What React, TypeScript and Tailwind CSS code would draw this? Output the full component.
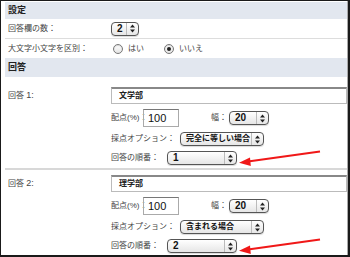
import React from "react";

const FONT = '"Liberation Sans", "Noto Sans CJK JP", sans-serif';

function Arrows() {
  return (
    <svg width="7" height="9" viewBox="0 0 7 9" className="shrink-0">
      <path d="M3.5 0.5 L6 3.5 L1 3.5 Z" fill="#222" />
      <path d="M3.5 8.5 L6 5.5 L1 5.5 Z" fill="#222" />
    </svg>
  );
}

function Select({ value, w, latin }: { value: string; w: string; latin?: boolean }) {
  return (
    <div
      className={`${w} h-[14px] shrink-0 flex items-center justify-between rounded-[4px] border border-[#555] bg-gradient-to-b from-white to-[#e6e6e6] pl-[5px] pr-[2px] ${latin ? "text-[10px]" : "text-[8px]"} font-bold text-[#111] leading-none whitespace-nowrap shadow-[0_1px_1px_rgba(0,0,0,0.15)]`}
    >
      <span>{value}</span>
      <div className="flex h-full items-center border-l border-[#bbb] pl-[2px]">
        <Arrows />
      </div>
    </div>
  );
}

function Radio({ checked }: { checked?: boolean }) {
  return (
    <div className="w-[10px] h-[10px] shrink-0 rounded-full border border-[#777] bg-gradient-to-b from-white to-[#e4e4e4] flex items-center justify-center shadow-[inset_0_1px_1px_rgba(0,0,0,0.15)]">
      {checked && <div className="w-[4px] h-[4px] rounded-full bg-[#222]" />}
    </div>
  );
}

function RedArrow() {
  return (
    <svg width="84" height="16" viewBox="0 0 84 16" className="absolute">
      <line x1="82" y1="1.5" x2="10" y2="11.5" stroke="#f01818" strokeWidth="2" />
      <path d="M1 12.8 L12 7.5 L12.8 16 Z" fill="#f01818" />
    </svg>
  );
}

const LBL = "text-[8px] text-[#444] whitespace-nowrap";

function Answer({
  n,
  text,
  option,
  order,
  top,
}: {
  n: string;
  text: string;
  option: string;
  order: string;
  top: string;
}) {
  return (
    <div className="relative">
      <div className={`flex items-center h-[17px] ${top}`}>
        <div className={`w-[106px] shrink-0 pl-[3px] ${LBL}`}>
          回答 <span className="text-[9px]">{n}:</span>
        </div>
        <div className="flex-1 h-[17px] border border-[#bbb] border-t-[#888] border-t-2 flex items-center pl-[7px] text-[8px] font-bold text-[#222] whitespace-nowrap">
          {text}
        </div>
      </div>
      <div className="flex items-center h-[18px] mt-[5px] pl-[106px]">
        <span className={`w-[32px] shrink-0 ${LBL}`}>配点(%)：</span>
        <div className="w-[36px] h-[18px] shrink-0 border border-[#aaa] border-t-[#777] flex items-center pl-[4px] text-[11px] text-[#111]">
          100
        </div>
        <span className={`ml-[32px] w-[18px] shrink-0 ${LBL}`}>幅：</span>
        <Select value="20" w="w-[40px]" latin />
      </div>
      <div className="flex items-center h-[14px] mt-[5px] pl-[106px]">
        <span className={`w-[69px] shrink-0 ${LBL}`}>採点オプション：</span>
        <Select value={option} w="w-[84px]" />
      </div>
      <div className="flex items-center h-[14px] mt-[5px] pl-[106px]">
        <span className={`w-[56px] shrink-0 ${LBL}`}>回答の順番：</span>
        <Select value={order} w="w-[70px]" latin />
      </div>
      <div className="absolute left-[233px] bottom-[-1px]">
        <div className="relative w-[84px] h-[16px]">
          <RedArrow />
        </div>
      </div>
    </div>
  );
}

export default function App() {
  return (
    <div
      className="w-[350px] h-[257px] overflow-hidden bg-white border-l border-t border-r-2 border-b-2 border-[#1a1a1a]"
      style={{ fontFamily: FONT }}
    >
      <div className="h-full pl-[4px] border-r border-[#aaa] pt-[1px]">
        <div className="h-[17px] bg-[#e2e7ef] flex items-center pl-[3px] text-[9px] font-bold text-[#222]">
          設定
        </div>
        <div className="flex items-center h-[20px] border-b border-[#ddd]">
          <div className={`w-[106px] shrink-0 pl-[3px] ${LBL}`}>回答欄の数：</div>
          <Select value="2" w="w-[28px]" latin />
        </div>
        <div className="flex items-center h-[19px]">
          <div className={`w-[108px] shrink-0 pl-[3px] ${LBL}`}>大文字小文字を区別：</div>
          <Radio />
          <span className={`ml-[5px] w-[36px] ${LBL}`}>はい</span>
          <Radio checked />
          <span className={`ml-[5px] ${LBL}`}>いいえ</span>
        </div>
        <div className="h-[19px] bg-[#e2e7ef] flex items-center pl-[3px] text-[9px] font-bold text-[#222]">
          回答
        </div>
        <Answer n="1" text="文学部" option="完全に等しい場合" order="1" top="mt-[10px]" />
        <div className="h-[2px] bg-[#d8d8d8] mt-[3px]" />
        <Answer n="2" text="理学部" option="含まれる場合" order="2" top="mt-[5px]" />
      </div>
    </div>
  );
}
